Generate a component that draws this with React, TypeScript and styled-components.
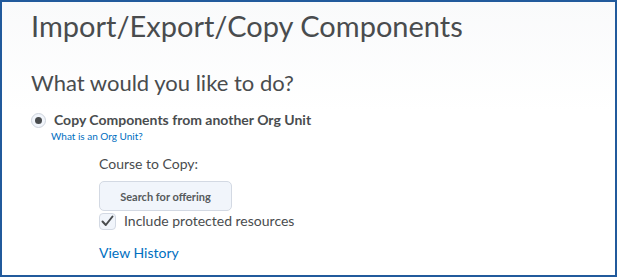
import styled, { createGlobalStyle } from "styled-components";

const GlobalStyle = createGlobalStyle`
  html, body {
    margin: 0;
    padding: 0;
    background: #ffffff;
  }
  body {
    font-family: Lato, "Noto Sans", sans-serif;
    color: #494c4e;
  }
`;

const Frame = styled.div`
  width: 617px;
  height: 277px;
  box-sizing: border-box;
  border: 2px solid #215a9c;
  background: linear-gradient(to bottom, #f9fafb 0px, #ffffff 110px);
  padding: 6px 0 0 29px;
  overflow: hidden;
`;

const Title = styled.h1`
  margin: 0;
  font-size: 29px;
  font-weight: 400;
  line-height: 36px;
  color: #494c4e;
`;

const Subtitle = styled.h2`
  margin: 25px 0 0 0;
  font-size: 22px;
  font-weight: 400;
  line-height: 28px;
  color: #494c4e;
`;

const RadioRow = styled.div`
  display: flex;
  align-items: center;
  gap: 8px;
  margin-top: 14px;
`;

const Radio = styled.span`
  width: 15px;
  height: 15px;
  box-sizing: border-box;
  border-radius: 50%;
  border: 1px solid #cdd3dc;
  background: #f1f5fb;
  display: flex;
  align-items: center;
  justify-content: center;
  &::after {
    content: "";
    width: 7px;
    height: 7px;
    border-radius: 50%;
    background: #494c4e;
  }
`;

const Label = styled.span<{ $bold?: boolean }>`
  font-size: 14px;
  line-height: 18px;
  font-weight: ${(p) => (p.$bold ? 700 : 400)};
  color: #494c4e;
`;

const SmallLink = styled.a`
  display: block;
  margin: 1px 0 0 20px;
  font-size: 10px;
  line-height: 13px;
  color: #006fbf;
  text-decoration: none;
`;

const Options = styled.div`
  margin: 12px 0 0 68px;
  display: flex;
  flex-direction: column;
  align-items: flex-start;
`;

const Button = styled.button`
  margin-top: 8px;
  width: 133px;
  height: 30px;
  box-sizing: border-box;
  border: 1px solid #d3d9e3;
  border-radius: 5px;
  background: #f1f5fb;
  font-family: Lato, "Noto Sans", sans-serif;
  font-size: 11px;
  font-weight: 700;
  color: #565a5c;
  padding: 0;
`;

const CheckRow = styled.label`
  display: flex;
  align-items: center;
  gap: 8px;
  margin-top: 1px;
`;

const Checkbox = styled.span`
  width: 17px;
  height: 17px;
  box-sizing: border-box;
  border: 1px solid #d3d9e3;
  border-radius: 4px;
  background: #f1f5fb;
  display: flex;
  align-items: center;
  justify-content: center;
`;

const HistoryLink = styled.a`
  margin-top: 14px;
  font-size: 14px;
  line-height: 18px;
  color: #006fbf;
  text-decoration: none;
`;

export default function App() {
  return (
    <>
      <GlobalStyle />
      <Frame>
        <Title>Import/Export/Copy Components</Title>
        <Subtitle>What would you like to do?</Subtitle>
        <RadioRow>
          <Radio />
          <Label $bold>Copy Components from another Org Unit</Label>
        </RadioRow>
        <SmallLink href="#">What is an Org Unit?</SmallLink>
        <Options>
          <Label>Course to Copy:</Label>
          <Button>Search for offering</Button>
          <CheckRow>
            <Checkbox>
              <svg width="13" height="12" viewBox="0 0 13 12">
                <path
                  d="M1.5 6.5 L4.8 10 L11.5 1.5"
                  fill="none"
                  stroke="#494c4e"
                  strokeWidth="2"
                  strokeLinecap="round"
                  strokeLinejoin="round"
                />
              </svg>
            </Checkbox>
            <Label>Include protected resources</Label>
          </CheckRow>
          <HistoryLink href="#">View History</HistoryLink>
        </Options>
      </Frame>
    </>
  );
}
